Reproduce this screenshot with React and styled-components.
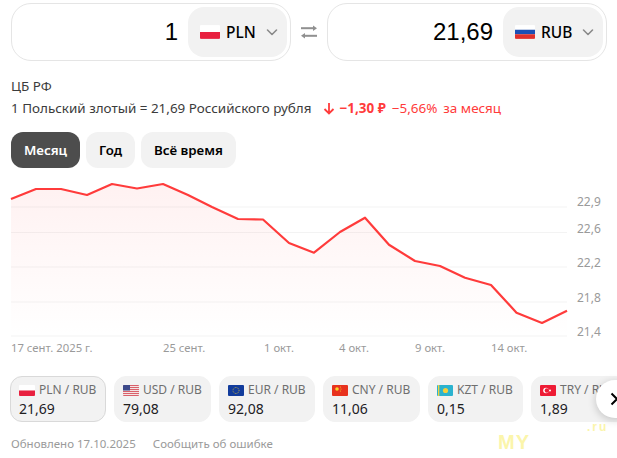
import React from 'react'
import styled, { createGlobalStyle } from 'styled-components'

const GlobalStyle = createGlobalStyle`
  html, body { margin: 0; padding: 0; background: #fff; }
  body { font-family: "Noto Sans", "Open Sans", sans-serif; color: #21201f; overflow: hidden; }
`

const Page = styled.div`
  position: relative;
  width: 617px;
  height: 458px;
  overflow: hidden;
  padding: 3px 0 0 11px;
  box-sizing: border-box;
`

const Converter = styled.div`
  display: flex;
  align-items: center;
  width: 596px;
`

const AmountBox = styled.div`
  box-sizing: border-box;
  width: 280px;
  height: 58px;
  border: 1px solid #e5e5e5;
  border-radius: 20px;
  display: flex;
  align-items: center;
  justify-content: flex-end;
  padding: 3px;
  gap: 10px;
`

const Amount = styled.span`
  font-family: "Liberation Sans", Arial, sans-serif;
  font-size: 24px;
  color: #000;
`

const CurrencyButton = styled.div`
  box-sizing: border-box;
  width: ${p => p.$wide ? 100 : 99}px;
  height: 50px;
  background: #f2f2f2;
  border-radius: 16px;
  display: flex;
  align-items: center;
  padding: 0 8px 0 12px;
  font-size: 15.5px;
  font-weight: 500;
  color: #000;
`

const Code = styled.span`
  margin-left: 6px;
  flex: 1;
`

const SwapSlot = styled.div`
  width: 36px;
  display: flex;
  justify-content: center;
  color: #909090;
`

const Source = styled.div`
  margin-top: 16px;
  font-size: 13.45px;
  line-height: 18px;
  color: #3c3c3c;
`

const RateLine = styled.div`
  margin-top: 4px;
  display: flex;
  align-items: center;
  font-size: 13.45px;
  line-height: 18px;
  color: #3c3c3c;
  white-space: nowrap;
`

const Down = styled.span`
  display: inline-flex;
  color: #ff3b3b;
  margin: 0 5px 0 11px;
`

const Delta = styled.span`
  color: #ff3b3b;
  font-weight: ${p => p.$bold ? 700 : 400};
  margin-right: 6px;
`

const Periods = styled.div`
  display: flex;
  gap: 6px;
  margin-top: 15px;
`

const PeriodButton = styled.div`
  height: 36px;
  padding: 0 13px;
  display: flex;
  align-items: center;
  border-radius: 12px;
  font-size: 13.3px;
  font-weight: 600;
  background: ${p => p.$active ? '#4d4d4d' : '#f2f2f2'};
  color: ${p => p.$active ? '#fff' : '#000'};
`

const ChartSvg = styled.svg`
  display: block;
  margin: 10px 0 0 -11px;
`

const AxisText = styled.text`
  font-size: ${p => p.$size}px;
  fill: #9a9a9a;
`

const Tickers = styled.div`
  display: flex;
  gap: 8px;
  margin: 20px 0 0 -1px;
  width: 700px;
`

const Ticker = styled.div`
  box-sizing: border-box;
  flex: none;
  width: ${p => p.$w}px;
  height: 46px;
  border-radius: 12px;
  background: #f2f2f2;
  border: 1px solid ${p => p.$active ? '#d9d9d9' : '#f2f2f2'};
  padding: 4px 8px 0 8px;
`

const TickerHead = styled.div`
  display: flex;
  align-items: center;
  gap: 4px;
  font-size: 12px;
  line-height: 18px;
  color: #6f6f6f;
  white-space: nowrap;
`

const TickerValue = styled.div`
  font-size: 14px;
  line-height: 20px;
  color: #21201f;
`

const Footer = styled.div`
  display: flex;
  gap: 17px;
  margin-top: 13px;
  font-size: 11.5px;
  line-height: 18px;
  color: #9a9a9a;
`

const NextButton = styled.div`
  position: absolute;
  left: 596px;
  top: 380px;
  width: 38px;
  height: 38px;
  border-radius: 50%;
  background: #fff;
  box-shadow: 0 2px 8px rgba(0, 0, 0, 0.2);
  display: flex;
  align-items: center;
  padding-left: 14px;
  box-sizing: border-box;
`

const Watermark = styled.span`
  position: absolute;
  left: ${p => p.$x}px;
  top: ${p => p.$y}px;
  font-family: "Liberation Sans", sans-serif;
  font-weight: 700;
  font-size: ${p => p.$size}px;
  line-height: 1;
  letter-spacing: ${p => p.$spacing}px;
  color: #fbf5ab;
`

const FlagSvg = styled.svg`
  flex: none;
  border-radius: 1px;
  display: block;
`

const Flag = ({ code, w = 16, h = 11 }) => {
  const body = {
    PLN: <><rect width="16" height="5.5" fill="#fff" /><rect y="5.5" width="16" height="5.5" fill="#e8203f" /></>,
    RUB: <><rect width="16" height="3.7" fill="#fff" /><rect y="3.7" width="16" height="3.6" fill="#1c4fb5" /><rect y="7.3" width="16" height="3.7" fill="#e0302c" /></>,
    USD: <><rect width="16" height="11" fill="#f3e3e3" />{[0, 2, 4, 6, 8, 10].map(y => <rect key={y} y={y} width="16" height="1" fill="#d9606a" />)}<rect width="7" height="5.5" fill="#3d4a8a" /></>,
    EUR: <><rect width="16" height="11" fill="#123c9c" /><circle cx="8" cy="5.5" r="3" fill="none" stroke="#e8c830" strokeWidth="0.8" strokeDasharray="0.8 0.8" /></>,
    CNY: <><rect width="16" height="11" fill="#e8321e" /><circle cx="5" cy="4" r="1.8" fill="#f8d82a" /><circle cx="8.4" cy="2" r="0.5" fill="#f8d82a" /><circle cx="9" cy="4" r="0.5" fill="#f8d82a" /><circle cx="8.4" cy="6" r="0.5" fill="#f8d82a" /></>,
    KZT: <><rect width="16" height="11" fill="#2bb3cf" /><circle cx="8.5" cy="5.5" r="2.6" fill="#f5cf3a" /><rect x="1" width="1.3" height="11" fill="#f5cf3a" /></>,
    TRY: <><rect width="16" height="11" fill="#ee1c35" /><circle cx="6" cy="5.5" r="2.8" fill="#fff" /><circle cx="6.9" cy="5.5" r="2.2" fill="#ee1c35" /><circle cx="10" cy="5.5" r="1" fill="#fff" /></>,
  }[code]
  return <FlagSvg width={w} height={h} viewBox="0 0 16 11">{body}</FlagSvg>
}

const Chevron = () => (
  <svg width="14" height="14" viewBox="0 0 14 14" fill="none" stroke="#8a8a8a" strokeWidth="1.6" strokeLinecap="round" strokeLinejoin="round">
    <path d="M2.5 5l4.5 4.5L11.500 5" />
  </svg>
)

const SwapIcon = () => (
  <svg width="16" height="14" viewBox="0 0 16 14" fill="currentColor">
    <rect x="0" y="2.200" width="13" height="2" />
    <path d="M12 0.500l4 2.700-4 2.700z" />
    <rect x="3" y="9.800" width="13" height="2" />
    <path d="M4 8.100l-4 2.700 4 2.700z" />
  </svg>
)

const points = [
  [11, 199], [36, 189], [61, 189], [87, 195], [112, 184], [137, 188.5], [163, 184],
  [188, 195], [212, 207], [238, 219], [263, 219.500], [289, 243], [314, 252.700], [340, 232],
  [365, 217.700], [389, 244.700], [415, 261], [440, 266], [465, 277.700], [491, 285],
  [516.500, 312.700], [542, 323], [567, 310.700],
]
const Y0 = 178
const line = points.map(([x, y]) => `${x},${y - Y0}`).join(' ')
const grid = [29, 54.500, 89, 124, 158]
const yLabels = [['22,9', 24], ['22,6', 51], ['22,2', 85], ['21,8', 120], ['21,4', 154]]
const xLabels = [['17 сент. 2025 г.', 11], ['25 сент.', 163], ['1 окт.', 264], ['4 окт.', 339], ['9 окт.', 415], ['14 окт.', 491]]

const Chart = () => (
  <ChartSvg width="617" height="178" viewBox="0 0 617 178">
    <defs>
      <linearGradient id="fill" x1="0" y1="0" x2="0" y2="1">
        <stop offset="0" stopColor="#ff3b3b" stopOpacity="0.07" />
        <stop offset="1" stopColor="#ff3b3b" stopOpacity="0" />
      </linearGradient>
    </defs>
    {grid.map(y => <line key={y} x1="11" x2="567" y1={y} y2={y} stroke="#f3f3f3" strokeWidth="1" />)}
    <polygon points={`11,158 ${line} 567,158`} fill="url(#fill)" />
    <polyline points={line} fill="none" stroke="#ff3b3b" strokeWidth="2.200" strokeLinejoin="round" />
    {yLabels.map(([t, y]) => <AxisText key={t} $size={12} x="577" y={y + 4}>{t}</AxisText>)}
    {xLabels.map(([t, x]) => <AxisText key={t} $size={11.3} x={x} y="174">{t}</AxisText>)}
  </ChartSvg>
)

const tickers = [
  ['PLN', '21,69', 96, true],
  ['USD', '79,08', 97],
  ['EUR', '92,08', 96],
  ['CNY', '11,06', 97],
  ['KZT', '0,15', 95],
  ['TRY', '1,89', 97],
]

export default function App() {
  return (
    <Page>
      <GlobalStyle />
      <Converter>
        <AmountBox>
          <Amount>1</Amount>
          <CurrencyButton>
            <Flag code="PLN" w={20} h={14} />
            <Code>PLN</Code>
            <Chevron />
          </CurrencyButton>
        </AmountBox>
        <SwapSlot><SwapIcon /></SwapSlot>
        <AmountBox>
          <Amount>21,69</Amount>
          <CurrencyButton $wide>
            <Flag code="RUB" w={20} h={14} />
            <Code>RUB</Code>
            <Chevron />
          </CurrencyButton>
        </AmountBox>
      </Converter>
      <Source>ЦБ РФ</Source>
      <RateLine>
        1 Польский злотый = 21,69 Российского рубля
        <Down>
          <svg width="12" height="13" viewBox="0 0 12 13" fill="none" stroke="currentColor" strokeWidth="1.800">
            <path d="M6 1v10.500M1.500 7L6 11.500 10.500 7" />
          </svg>
        </Down>
        <Delta $bold>−1,30 ₽</Delta>
        <Delta>−5,66%</Delta>
        <Delta>за месяц</Delta>
      </RateLine>
      <Periods>
        <PeriodButton $active>Месяц</PeriodButton>
        <PeriodButton>Год</PeriodButton>
        <PeriodButton>Всё время</PeriodButton>
      </Periods>
      <Chart />
      <Tickers>
        {tickers.map(([code, value, w, active]) => (
          <Ticker key={code} $w={w} $active={active}>
            <TickerHead><Flag code={code} />{code} / RUB</TickerHead>
            <TickerValue>{value}</TickerValue>
          </Ticker>
        ))}
      </Tickers>
      <Footer>
        <span>Обновлено 17.10.2025</span>
        <span>Сообщить об ошибке</span>
      </Footer>
      <NextButton>
        <svg width="10" height="16" viewBox="0 0 10 16" fill="none" stroke="#000" strokeWidth="2">
          <path d="M1.500 2.500L7 8l-5.500 5.500" />
        </svg>
      </NextButton>
      <Watermark $x={498} $y={432} $size={20} $spacing={1}>MY</Watermark>
      <Watermark $x={587} $y={421} $size={12} $spacing={2}>.ru</Watermark>
    </Page>
  )
}
